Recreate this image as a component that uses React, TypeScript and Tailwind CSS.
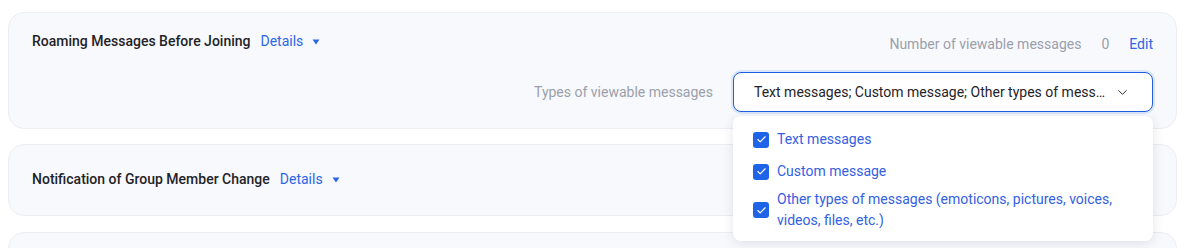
import { ChevronDown, Check } from 'lucide-react'

const options = [
  { text: 'Text messages', gap: '' },
  { text: 'Custom message', gap: 'mt-[11px]' },
  { text: 'Other types of messages (emoticons, pictures, voices, videos, files, etc.)', gap: 'mt-[7px]' },
]

function Caret() {
  return (
    <svg width="8" height="6" viewBox="0 0 8 6" className="ml-[9px] mt-[1px]">
      <path d="M0.5 0.5h7L4 5.5z" fill="#2b66e8" />
    </svg>
  )
}

function Title({ text }: { text: string }) {
  return (
    <div className="flex items-center text-[14px] leading-[20px]">
      <span className="font-medium text-[#1f2329]">{text}</span>
      <span className="ml-[10px] text-[#2b66e8]">Details</span>
      <Caret />
    </div>
  )
}

export default function App() {
  return (
    <div className="min-h-screen bg-white pl-[8px] pr-[14px] pt-[12px] font-['Roboto',sans-serif] overflow-hidden h-[248px]">
      <div className="rounded-[16px] border border-[#eceef3] bg-[#f8f9fc] h-[117px] pl-[23px] pr-[23px] pt-[17px] relative">
        <div className="flex justify-between">
          <div className="pt-[1px]">
            <Title text="Roaming Messages Before Joining" />
          </div>
          <div className="flex items-center text-[14px] leading-[20px] pt-[4px]">
            <span className="text-[#9aa0ab]">Number of viewable messages</span>
            <span className="ml-[20px] text-[#9aa0ab]">0</span>
            <span className="ml-[20px] text-[#2b66e8]">Edit</span>
          </div>
        </div>
        <div className="flex justify-end items-center mt-[18px]">
          <span className="text-[14px] text-[#9aa0ab] mr-[20px]">Types of viewable messages</span>
          <div className="relative">
            <div className="w-[420px] h-[40px] rounded-[8px] border border-[#1d5fe0] ring-2 ring-[#dbe6fb] bg-white flex items-center pl-[20px] pr-[22px]">
              <span className="flex-1 truncate text-[14px] text-[#1f2329]">
                Text messages; Custom message; Other types of messages (emoticons, pictures, voices, videos, files, etc.)
              </span>
              <ChevronDown size={15} strokeWidth={1.6} className="ml-[9px] text-[#2a2f36]" />
            </div>
            <div className="absolute left-0 top-[44px] z-10 w-[420px] rounded-[8px] bg-white shadow-[0_2px_12px_rgba(30,40,80,0.12)] pl-[20px] pr-[24px] pt-[13px] pb-[10px]">
              {options.map(o => (
                <div key={o.text} className={`flex items-center ${o.gap}`}>
                  <span className="w-[16px] h-[16px] rounded-[3px] bg-[#1f63e6] flex items-center justify-center shrink-0">
                    <Check size={11} strokeWidth={2.5} className="text-white" />
                  </span>
                  <span className="ml-[8px] text-[14px] leading-[21px] text-[#3460e3]">{o.text}</span>
                </div>
              ))}
            </div>
          </div>
        </div>
      </div>
      <div className="mt-[15px] rounded-[16px] border border-[#eceef3] bg-[#f8f9fc] h-[72px] pl-[23px] flex items-center pb-[2px]">
        <Title text="Notification of Group Member Change" />
      </div>
      <div className="mt-[16px] rounded-[16px] border border-[#eceef3] bg-[#f8f9fc] h-[60px]" />
    </div>
  )
}
